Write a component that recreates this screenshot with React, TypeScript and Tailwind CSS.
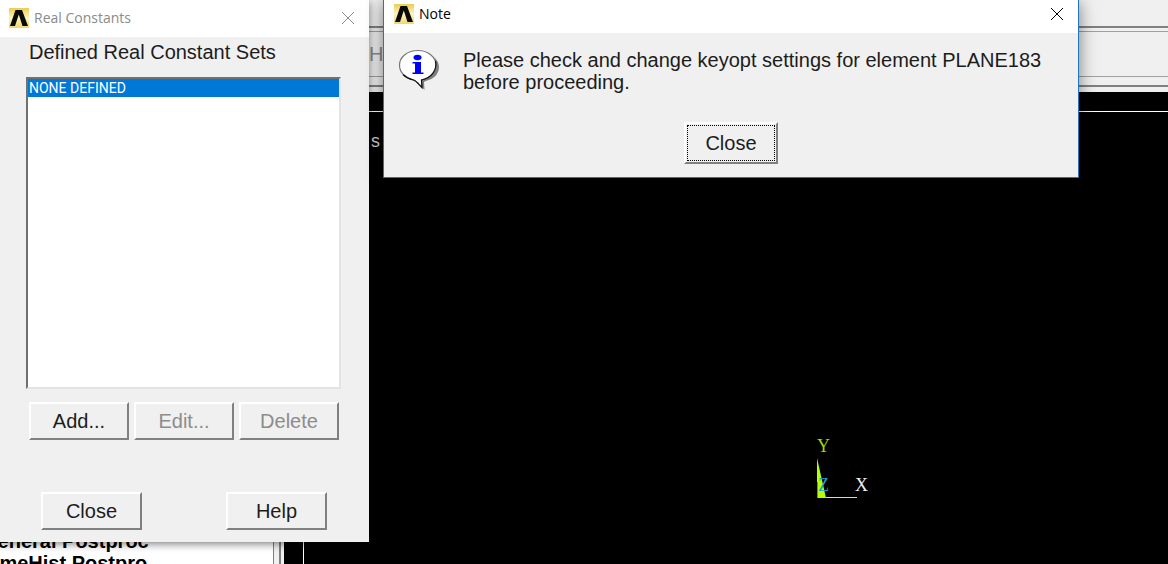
import type { ReactNode } from 'react';

interface PushButtonProps {
  label: string;
  disabled?: boolean;
  focused?: boolean;
}

const PushButton = ({ label, disabled, focused }: PushButtonProps) => (
  <button
    type="button"
    disabled={disabled}
    className={`w-full p-px text-[20px] leading-6 border-2 border-t-white border-l-white border-r-[#808080] border-b-[#808080] bg-[#f0f0f0] text-[#1c1c1c] disabled:text-[#8c8c8c] ${
      focused ? 'h-[42px]' : 'h-[38px]'
    }`}
  >
    <span
      className={`flex h-full items-center justify-center ${
        focused ? 'border border-dotted border-black' : ''
      }`}
    >
      {label}
    </span>
  </button>
);

const AnsysLogo = () => (
  <svg width="20" height="20" viewBox="0 0 20 20" aria-hidden="true">
    <defs>
      <linearGradient id="gold" x1="0" y1="0" x2="0" y2="1">
        <stop offset="0" stopColor="#e9cd55" />
        <stop offset="0.5" stopColor="#fff3c0" />
        <stop offset="1" stopColor="#f0d76a" />
      </linearGradient>
    </defs>
    <rect width="20" height="20" fill="url(#gold)" />
    <path d="M1 18 6.500 2h6.500l6 16h-5.500L9.800 6.500 6 18z" fill="#0a0a0a" />
  </svg>
);

const NoteIcon = () => (
  <svg width="42" height="42" viewBox="0 0 42 42" aria-hidden="true">
    <path
      d="M22 4c11 0 19 6 19 14 0 7-5 12-13 14l-2 1 .5 8-8-9-3-2z"
      fill="#808080"
    />
    <path
      d="M20 1.500C9.500 1.500 1.500 8 1.500 16S8 29.500 15.500 31c3 1 5 4 8.500 7.500L23.500 31C32 29.500 38 23.500 38 16S30.500 1.500 20 1.500z"
      fill="#fff"
      stroke="#777"
      strokeWidth="1.200"
    />
    <path
      d="M37.500 12c2 9-4 17-14 19l.5 7.500C20.500 35 18.500 32 15.500 31 11 30 7.500 28 5 25.500"
      fill="none"
      stroke="#111"
      strokeWidth="1.200"
    />
    <ellipse cx="19.500" cy="8.500" rx="4" ry="2.700" fill="#00f" />
    <path d="M14.500 13H23v10.500h2.500V25h-11v-1.500H17v-9h-2.500z" fill="#00f" />
  </svg>
);

interface DialogWindowProps {
  title: string;
  titleClass: string;
  barClass: string;
  className: string;
  children: ReactNode;
}

const DialogWindow = ({ title, titleClass, barClass, className, children }: DialogWindowProps) => (
  <section className={`absolute bg-[#f0f0f0] ${className}`}>
    <header className={`flex items-center bg-white ${barClass} ${titleClass}`}>
      <AnsysLogo />
      <h1 className="ml-[5px] flex-1 font-['Open_Sans','Noto_Sans',sans-serif] text-[14px] leading-5">{title}</h1>
      <button type="button" aria-label={`Close ${title}`} className="p-px">
        <svg width="12" height="12" viewBox="0 0 12 12" stroke="currentColor" fill="none">
          <path d="M0 0l12 12M12 0L0 12" />
        </svg>
      </button>
    </header>
    {children}
  </section>
);

const RealConstants = () => (
  <DialogWindow
    title="Real Constants"
    titleClass="text-[#8a8a8a]"
    barClass="h-[37px] pb-[2px] pl-[9px] pr-[14px]"
    className="left-0 top-0 w-[369px] h-[542px] shadow-[0_2px_8px_rgba(0,0,0,0.5)]"
  >
    <div className="pl-[26px] pr-7 pt-[3px]">
      <label htmlFor="sets" className="block pl-[3px] text-[20px] leading-6">
        Defined Real Constant Sets
      </label>
      <select
        id="sets"
        size={2}
        defaultValue="none"
        className="mt-[13px] block h-[312px] w-full appearance-none overflow-hidden border-2 border-t-[#707070] border-l-[#707070] border-r-[#e3e3e3] border-b-[#e3e3e3] bg-white font-[Roboto,sans-serif] text-[14px] outline-none"
      >
        <option
          value="none"
          className="min-h-0 px-px py-px leading-[18px] text-white bg-[#0078d7] checked:text-white checked:bg-[linear-gradient(#0078d7,#0078d7)]"
        >
          NONE DEFINED
        </option>
      </select>
      <div className="mt-[13px] grid grid-cols-3 gap-[5px] pl-[3px] pr-[2px]">
        <PushButton label="Add..." />
        <PushButton label="Edit..." disabled />
        <PushButton label="Delete" disabled />
      </div>
      <div className="mt-[52px] flex justify-between pl-[15px] pr-[14px]">
        <div className="w-[101px]">
          <PushButton label="Close" />
        </div>
        <div className="w-[101px]">
          <PushButton label="Help" />
        </div>
      </div>
    </div>
  </DialogWindow>
);

const Note = () => (
  <DialogWindow
    title="Note"
    titleClass="text-black"
    barClass="h-[33px] pb-[6px] pl-[10px] pr-[14px]"
    className="left-[383px] top-0 w-[696px] h-[178px] border border-t-0 border-[#1f78bd] shadow-[0_2px_16px_rgba(0,0,0,0.5)]"
  >
    <div className="flex pl-[14px] pt-4">
      <NoteIcon />
      <p className="ml-[23px] w-[580px] text-[20px] leading-[22px]">
        Please check and change keyopt settings for element PLANE183 before proceeding.
      </p>
    </div>
    <div className="mx-auto mt-[29px] w-[94px]">
      <PushButton label="Close" focused />
    </div>
  </DialogWindow>
);

// Coordinate triad in the graphics area
const Triad = () => (
  <svg
    width="60"
    height="70"
    viewBox="0 0 60 70"
    className="absolute left-[814px] top-[434px] font-['Liberation_Serif',serif] text-[18px]"
  >
    <path d="M3 24v40h9z" fill="#b4ff00" />
    <path d="M3.500 48v16" stroke="#1e9bd7" />
    <path d="M12 63.500h31" stroke="#d8d8d8" />
    <text x="3" y="18" fill="#a0d800">Y</text>
    <text x="4" y="57" fill="#1e9bd7">Z</text>
    <text x="41" y="57" fill="#f0f0f0">X</text>
  </svg>
);

const App = () => (
  <main className="relative flex h-screen flex-col overflow-hidden bg-[#f0f0f0] font-['Liberation_Sans',Arial,sans-serif] text-[#1c1c1c]">
    <div className="flex h-[92px] shrink-0 flex-col">
      <div className="h-7 border-b-2 border-[#808080]" />
      <div className="mt-[3px] flex h-[46px] items-center border-y border-[#a0a0a0] pl-[369px] text-[20px] text-[#8c8c8c]">
        H
      </div>
      <div className="mt-2 border-t-2 border-[#808080]" />
    </div>
    <div className="flex flex-1">
      <nav className="flex w-[274px] flex-col justify-end overflow-hidden border-r border-[#808080] bg-white text-[20px] font-bold leading-[22px] text-black">
        <div className="-mb-[10px] -ml-[18px]">
          <div>General Postproc</div>
          <div>TimeHist Postpro</div>
        </div>
      </nav>
      <div className="mr-[3px] w-[7px] border-r-2 border-[#808080]" />
      <div className="flex flex-1 bg-black pl-[19px] pt-[19px]">
        <div className="flex-1 border-l border-t border-white pl-[66px] pt-[18px] font-['Liberation_Mono',monospace] text-[18px] leading-6 text-[#d8d8d8]">
          s
        </div>
      </div>
    </div>
    <Triad />
    <RealConstants />
    <Note />
  </main>
);

export default App;
